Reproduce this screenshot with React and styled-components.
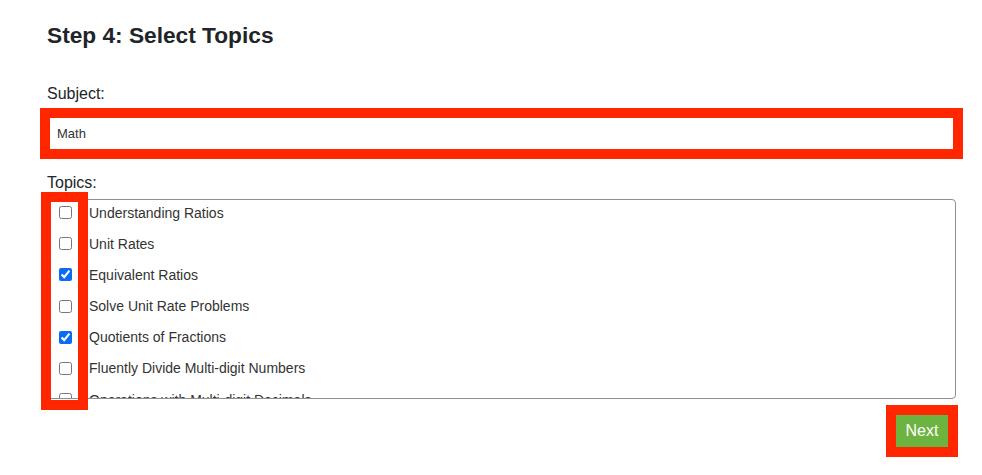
import styled, { createGlobalStyle } from 'styled-components'

const GlobalStyle = createGlobalStyle`
  html, body {
    margin: 0;
    padding: 0;
    background: #fff;
  }
  body {
    font-family: "Liberation Sans", Arial, sans-serif;
    color: #212529;
  }
`

const Page = styled.div`
  padding: 22px 26px 0 47px;
`

const Heading = styled.h4`
  margin: 0;
  font-size: 22.7px;
  line-height: 27px;
  font-weight: 700;
  color: #212529;
`

const Label = styled.label`
  display: block;
  font-size: 16px;
  line-height: 24px;
  margin-top: ${(p) => p.$top}px;
  margin-bottom: ${(p) => p.$bottom}px;
`

// red annotation frame drawn around a field
const Highlight = styled.div`
  border: 10px solid #ff2600;
  margin: 0 ${(p) => p.$side || 0}px;
`

const TextInput = styled.input`
  display: block;
  box-sizing: border-box;
  width: 100%;
  height: 31px;
  border: none;
  outline: none;
  padding: 0 7px;
  font-family: "Liberation Sans", Arial, sans-serif;
  font-size: 13px;
  color: #333;
  background: #fff;
`

const ListWrap = styled.div`
  position: relative;
`

const TopicList = styled.div`
  box-sizing: border-box;
  height: 200px;
  border: 1px solid #8f8f8f;
  border-radius: 4px;
  overflow-y: auto;
  scrollbar-width: none;
  display: flex;
  flex-direction: column;
  gap: 5.2px;
  padding-left: 11px;
  &::-webkit-scrollbar {
    display: none;
  }
`

const Row = styled.label`
  flex: none;
  display: flex;
  align-items: center;
  gap: 17px;
  height: 26px;
  font-size: 14px;
  color: #333;
`

const Check = styled.input`
  margin: 0;
  width: 13px;
  height: 13px;
  accent-color: #0a6cf5;
`

const ColumnFrame = styled.div`
  position: absolute;
  left: -6px;
  top: -7px;
  width: 27px;
  height: 198px;
  border: 10px solid #ff2600;
  pointer-events: none;
`

const Footer = styled.div`
  display: flex;
  justify-content: flex-end;
  margin-top: 6px;
  margin-right: -2px;
`

const NextButton = styled.button`
  display: block;
  width: 52px;
  height: 32px;
  border: none;
  border-radius: 0;
  padding: 0;
  background: #6db33f;
  color: #fff;
  font-family: "Liberation Sans", Arial, sans-serif;
  font-size: 16px;
  cursor: pointer;
`

const topics = [
  { name: 'Understanding Ratios', checked: false },
  { name: 'Unit Rates', checked: false },
  { name: 'Equivalent Ratios', checked: true },
  { name: 'Solve Unit Rate Problems', checked: false },
  { name: 'Quotients of Fractions', checked: true },
  { name: 'Fluently Divide Multi-digit Numbers', checked: false },
  { name: 'Operations with Multi-digit Decimals', checked: false },
  { name: 'Common Factors and Multiples', checked: false },
]

export default function App() {
  return (
    <>
      <GlobalStyle />
      <Page>
        <Heading>Step 4: Select Topics</Heading>
        <Label htmlFor='subject' $top={33} $bottom={1.5}>Subject:</Label>
        <Highlight $side={-7}>
          <TextInput id='subject' type='text' defaultValue='Math' />
        </Highlight>
        <Label $top={12.5} $bottom={3.5}>Topics:</Label>
        <ListWrap>
          <TopicList>
            {topics.map((t) => (
              <Row key={t.name}>
                <Check type='checkbox' defaultChecked={t.checked} />
                {t.name}
              </Row>
            ))}
          </TopicList>
          <ColumnFrame />
        </ListWrap>
        <Footer>
          <Highlight>
            <NextButton type='button'>Next</NextButton>
          </Highlight>
        </Footer>
      </Page>
    </>
  )
}
